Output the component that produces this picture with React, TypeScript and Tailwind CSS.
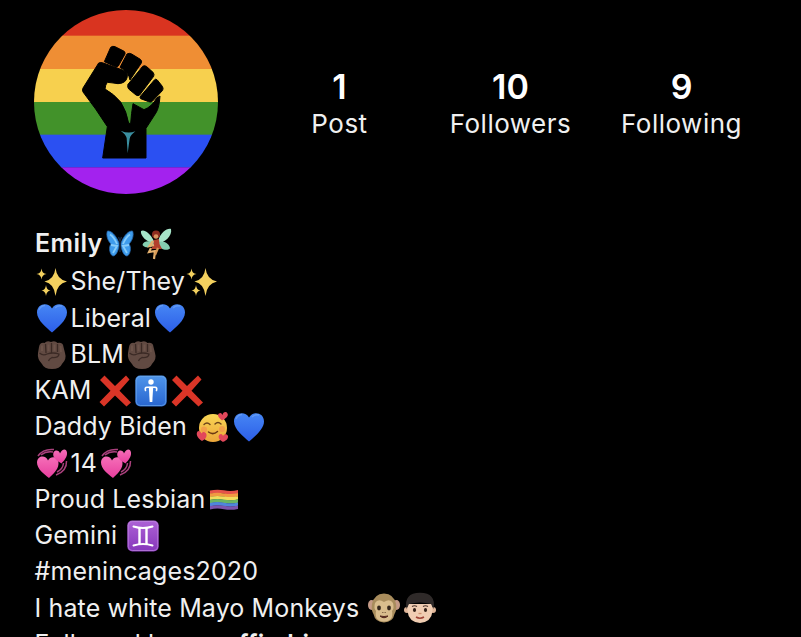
import React from 'react';
import clsx from 'clsx';

const Avatar = () => (
  <svg viewBox="24 26 552 552" className="h-[184px] w-[184px] shrink-0 rounded-full">
    <rect x="24" y="26" width="552" height="78" fill="#d93420" />
    <rect x="24" y="103" width="552" height="101" fill="#ef8e34" />
    <rect x="24" y="203" width="552" height="100" fill="#f7d04e" />
    <rect x="24" y="302" width="552" height="99" fill="#42922a" />
    <rect x="24" y="400" width="552" height="99" fill="#2b50f2" />
    <rect x="24" y="498" width="552" height="80" fill="#a322ee" />
    <g fill="#000" stroke="#000" strokeWidth="3" strokeLinejoin="round">
      <path d="M218 185 Q224 182 232 185 L292 207 Q306 213 304 226 Q301 246 276 247 Q256 244 244 243 Q238 250 237 263 Q264 278 284 302 Q302 330 308 366 L314 366 Q316 336 321 307 L354 325 Q378 316 392 290 L402 284 Q400 316 391 333 L360 381 L360 470 L230 470 L244 376 Q210 322 171 272 Q168 266 171 260 Z" />
      <path d="M254 138 Q260 133 267 136 L293 149 Q299 152 297 158 L277 194 Q274 199 268 196 L235 181 Z" />
      <path d="M303 158 Q310 154 317 158 L343 174 Q349 179 346 185 L312 236 Q308 212 282 198 Z" />
      <path d="M350 195 Q355 191 361 195 L381 213 Q386 219 383 225 L341 281 Q336 285 330 281 L308 263 Q303 256 306 249 Z" />
      <path d="M385 236 Q389 231 394 236 L409 255 Q413 261 410 267 L379 300 Q374 304 368 301 L344 292 Q340 288 344 284 Z" />
    </g>
    <path d="M284 388 Q307 398 328 390 Q313 402 311 412 L305 456 L302 410 Q300 400 284 388 Z" fill="#3a8fa0" />
  </svg>
);

const art: Record<string, React.ReactNode> = {
  butterfly: (
    <>
      <path d="M17 15 C14 7 9 2.500 5.500 3 C4 6 5 12 9 16 C6.500 19 7.500 25 10 27.500 C13 29.500 16 24 17 18 Z" fill="#3f9cec" stroke="#2566ac" strokeWidth=".8" />
      <path d="M19 15 C22 7 27 2.500 30.500 3 C32 6 31 12 27 16 C29.500 19 28.500 25 26 27.500 C23 29.500 20 24 19 18 Z" fill="#3f9cec" stroke="#2566ac" strokeWidth=".8" />
      <path d="M8 6.500 Q12 9 15 16 M9 17 L15 18 L11 25 M28 6.500 Q24 9 21 16 M27 17 L21 18 L25 25" stroke="#86ccfa" strokeWidth="1.800" fill="none" />
      <path d="M18 13 L18 24 M18 13 L16.500 9 M18 13 L19.500 9" stroke="#182a46" strokeWidth="1.200" />
    </>
  ),
  fairy: (
    <>
      <path d="M16 13 C12 5 6 1 3 3 C2 8 9 14 16 16 Z M20 13 C23 4 29 0 33 1 C34.500 8 27 14 20 16 Z" fill="#a6e5c9" />
      <path d="M17 15 C11 12 5 13 4.500 17 C7 21 14 19 17 17 Z M20 14 C26 12 32 16 32 20.500 C28 24 22 20 19 17 Z" fill="#84cfb1" />
      <circle cx="18" cy="6.500" r="4" fill="#8d2c20" />
      <circle cx="18" cy="8.500" r="2.300" fill="#d8945f" />
      <path d="M15.500 12 L21 11 L21.500 16 L24 21 L13 21 L15.500 17 Z" fill="#b3402c" />
      <path d="M15 13 L11.500 18 L16 17 M13 20 L11 24 L17 23 L16 31" stroke="#e3b06f" strokeWidth="2.200" fill="none" />
      <path d="M20 20 L17 27" stroke="#d79a55" strokeWidth="2.200" />
    </>
  ),
  sparkles: (
    <g fill="#f3d05e">
      <path d="M21.500 2 Q22.800 13.500 33 15.500 Q22.800 17.500 21.500 30 Q20.200 17.500 10.500 15.500 Q20.200 13.500 21.500 2 Z" />
      <path d="M7.500 2.500 Q8 7.500 12.500 8 Q8 8.500 7.500 13.500 Q7 8.500 2.500 8 Q7 7.500 7.500 2.500 Z" />
      <path d="M12 19 Q12.500 24 16.500 24.500 Q12.500 25 12 30 Q11.500 25 7.500 24.500 Q11.500 24 12 19 Z" />
    </g>
  ),
  heart: (
    <>
      <path d="M18 30.500 C13 26 3 18.500 3 10.500 C3 1.500 14 -.5 18 6.500 C22 -.5 33 1.500 33 10.500 C33 18.500 23 26 18 30.500 Z" fill="url(#heartBlue)" />
      <path d="M5 8 Q7 3.500 11 3.500 M21 6 Q24 3 28 4" stroke="#74a9f5" strokeWidth="1.300" fill="none" opacity=".6" />
    </>
  ),
  fist: (
    <>
      <path d="M5 8 Q6 3 10.500 4 Q13 1 17 3 Q21 1 23.500 4 Q29 3 29.500 8 L31 14 Q33 20 28 25 Q26 30 18 30 Q10 30 8 25 Q3 20 4 14 Z" fill="#614a42" />
      <path d="M11.500 5 L12 14 M17.500 4 L17.500 14 M23.500 5 L23.500 13" stroke="#3b2a25" strokeWidth="1.300" fill="none" />
      <path d="M5.500 14 Q9 17 13 15 Q19 13 25 15 Q25 19 18 18.500 Q15 20 14.500 22" fill="none" stroke="#3b2a25" strokeWidth="1.300" />
      <path d="M8 6.500 L8 12 M14.500 5.500 L14.500 12 M20.500 5.500 L20.500 12 M26.500 7 L27 13" stroke="#755b50" strokeWidth="2" opacity=".6" />
    </>
  ),
  cross: (
    <path d="M3 5 L7.500 .5 L18 11 L29 .5 L32.500 4.500 L22.500 15.800 L34 27.500 L29.500 31.500 L18 20.500 L7 31.500 L2.500 27 L13.500 15.800 Z" fill="#da3527" />
  ),
  mens: (
    <>
      <rect x="2.300" y=".5" width="31.400" height="31" rx="5" fill="url(#tileBlue)" />
      <rect x="3.300" y="1.500" width="29.400" height="29" rx="4" fill="none" stroke="#6ca7ea" strokeWidth=".7" />
      <circle cx="18" cy="7" r="2.700" fill="#fff" />
      <path d="M12.500 15.500 Q11.500 12.300 14 12.300 H22 Q24.500 12.300 23.500 15.500" stroke="#fff" strokeWidth="1.600" strokeLinecap="round" fill="none" />
      <path d="M15.800 11.800 H20.200 L19.300 27 H16.700 Z" fill="#fff" />
    </>
  ),
  adore: (
    <>
      <circle cx="18" cy="17" r="14" fill="url(#faceYellow)" />
      <path d="M9 13.500 Q12 10.500 15 13.500 M20 13 Q23 10 26 13" stroke="#6b431a" strokeWidth="1.400" fill="none" strokeLinecap="round" />
      <path d="M13.500 21 Q18 24.500 22.500 20.500" stroke="#6b3912" strokeWidth="1.500" fill="none" strokeLinecap="round" />
      <circle cx="9" cy="18.500" r="3" fill="#f3864d" opacity=".55" />
      <circle cx="27" cy="18" r="3" fill="#f3864d" opacity=".55" />
      <g fill="#e2475a">
        <path d="M27 9.500 C23 6 22 4 24 2.500 C26 1 27 3 27.500 4 C28 1 31 0 32.500 2.500 C34 5 30 8 27 9.500 Z" />
        <path d="M7 30 C2 27 .8 23 2.500 20.500 C4.500 19 6 21 6.500 22.500 C8 20 11 21 11.500 23.500 C12 27 9 29 7 30 Z" />
        <path d="M28 31 C24 28.500 22.500 26 24.500 23.500 C26.500 22 27.500 23.500 28 25 C29 22.500 32 22.500 33 25 C33.500 28.500 30 30 28 31 Z" />
      </g>
    </>
  ),
  hearts: (
    <>
      <path d="M4 9 Q9 1.500 20 2.500 M7 8 Q12 4 19 5 M32.500 14 Q33 24 22 28 M29.500 16 Q29 22 23 25" stroke="#a9407c" strokeWidth="1.500" fill="none" />
      <path d="M15 31 C10 27 3 22 3 15.500 C3.500 8 12 8 14 13.500 C17 8 25 10 24.500 17 C24 23 19 27 15 31 Z" fill="url(#heartPink)" />
      <path d="M27.500 16.500 C22 13.500 18 10 19.500 5.500 C21.500 2 25.500 4 26 6.500 C28 1.500 32.500 1 33 5.500 C33.500 10 30 13.500 27.500 16.500 Z" fill="url(#heartPink)" />
    </>
  ),
  flag: (
    <>
      {['#e5534a', '#f19a42', '#f2dc5c', '#6bb562', '#4e86dc', '#7d55ae'].map((color, i) => (
        <path
          key={color}
          transform={`translate(0 ${i * 3.1})`}
          d="M4 6.500 Q11 5 18 6.300 T32 6 V9.400 Q25 11 18 9.700 T4 9.900 Z"
          fill={color}
        />
      ))}
    </>
  ),
  gemini: (
    <>
      <rect x="2.300" y=".5" width="31.400" height="31" rx="5" fill="url(#tilePurple)" />
      <rect x="3.300" y="1.500" width="29.400" height="29" rx="4" fill="none" stroke="#bf86e0" strokeWidth=".7" />
      <path d="M8.500 6.500 Q18 9.500 27.500 6.500 M8.500 25.500 Q18 22.500 27.500 25.500" stroke="#fff" strokeWidth="2" fill="none" strokeLinecap="round" />
      <path d="M14.500 8 V24 M21.500 8 V24" stroke="#fff" strokeWidth="2.400" />
    </>
  ),
  monkey: (
    <>
      <ellipse cx="5.500" cy="13" rx="3.500" ry="5" fill="#c59a86" />
      <ellipse cx="30.500" cy="13" rx="3.500" ry="5" fill="#c59a86" />
      <path d="M6 12 Q8 2 18 1.500 Q28 2 30 12 Q31 18 28.500 22 Q27 30 18 30.500 Q9 30 7.500 22 Q5 18 6 12 Z" fill="#a88c5c" />
      <path d="M18 10 Q12 6 9 11 Q7.500 16 10 19 Q8 29 18 29.500 Q28 29 26 19 Q28.500 16 27 11 Q24 6 18 10 Z" fill="#d9bd8d" />
      <ellipse cx="13" cy="16" rx="1.900" ry="2.400" fill="#33251b" />
      <ellipse cx="23" cy="16" rx="1.900" ry="2.400" fill="#33251b" />
      <path d="M16.500 20 L17.200 21 M19.500 20 L18.800 21" stroke="#61442e" strokeWidth="1" />
      <path d="M14 24 Q18 27.500 22 24 Q18 25 14 24 Z" fill="#54281d" stroke="#54281d" strokeWidth="1" />
    </>
  ),
  boy: (
    <>
      <circle cx="5" cy="18" r="3" fill="#dfb497" />
      <circle cx="31" cy="18" r="3" fill="#dfb497" />
      <path d="M5.500 12 H30.500 V19 Q29.500 30 18 31 Q6.500 30 5.500 19 Z" fill="#f0cdb2" />
      <path d="M4.500 17 Q1.500 1 18 .8 Q34.500 1 31.500 17 L29 12 Q18 9 7 12 Z" fill="#2f2a29" />
      <path d="M10 14.500 Q12.500 13 15 14.500 M21 14.500 Q23.500 13 26 14.500" stroke="#4b3329" strokeWidth="1.100" fill="none" />
      <ellipse cx="12.500" cy="18" rx="1.600" ry="2" fill="#352219" />
      <ellipse cx="23.500" cy="18" rx="1.600" ry="2" fill="#352219" />
      <path d="M16.500 21.500 H19.500" stroke="#ce946f" strokeWidth="1.300" />
      <path d="M14 25 Q18 27.500 22 25" stroke="#a04336" strokeWidth="1.500" fill="none" />
    </>
  ),
};

const Gradients = () => (
  <svg className="absolute h-0 w-0">
    <defs>
      <linearGradient id="heartBlue" x1="0" y1="0" x2="0" y2="1">
        <stop offset="0" stopColor="#4686f4" />
        <stop offset="1" stopColor="#2c5ee8" />
      </linearGradient>
      <linearGradient id="tileBlue" x1="0" y1="0" x2="0" y2="1">
        <stop offset="0" stopColor="#4f95ea" />
        <stop offset="1" stopColor="#2865cf" />
      </linearGradient>
      <linearGradient id="tilePurple" x1="0" y1="0" x2="0" y2="1">
        <stop offset="0" stopColor="#ad62d6" />
        <stop offset="1" stopColor="#8636bb" />
      </linearGradient>
      <linearGradient id="heartPink" x1="0" y1="0" x2="0" y2="1">
        <stop offset="0" stopColor="#f56fb8" />
        <stop offset="1" stopColor="#e83e9e" />
      </linearGradient>
      <linearGradient id="faceYellow" x1="0" y1="0" x2="0" y2="1">
        <stop offset="0" stopColor="#f8d655" />
        <stop offset="1" stopColor="#eca63a" />
      </linearGradient>
    </defs>
  </svg>
);

const Emoji = ({ name }: { name: string }) => (
  <svg viewBox="0 0 36 32" className="h-8 w-9 shrink-0">
    {art[name]}
  </svg>
);

const stats = [
  { value: '1', label: 'Post' },
  { value: '10', label: 'Followers' },
  { value: '9', label: 'Following' },
];

type Line = { text: string; width: string; before?: string[]; after?: string[] };

const bio: Line[] = [
  { before: ['sparkles'], text: 'She/They', width: 'w-[114px]', after: ['sparkles'] },
  { before: ['heart'], text: 'Liberal', width: 'w-[81.5px]', after: ['heart'] },
  { before: ['fist'], text: 'BLM', width: 'w-[54px]', after: ['fist'] },
  { text: 'KAM', width: 'w-[63px]', after: ['cross', 'mens', 'cross'] },
  { text: 'Daddy Biden', width: 'w-[161px]', after: ['adore', 'heart'] },
  { before: ['hearts'], text: '14', width: 'w-[28px]', after: ['hearts'] },
  { text: 'Proud Lesbian', width: 'w-[172px]', after: ['flag'] },
  { text: 'Gemini', width: 'w-[91px]', after: ['gemini'] },
  { text: '#menincages2020', width: 'w-[240px]' },
  { text: 'I hate white Mayo Monkeys', width: 'w-[332px]', after: ['monkey', 'boy'] },
];

const App: React.FC = () => {
  return (
    <div className="h-[637px] w-[801px] overflow-hidden bg-black pl-[34px] pt-[10px] font-['Inter',sans-serif] text-[#f0f0f0]">
      <Gradients />
      <header className="flex">
        <Avatar />
        <div className="ml-9 mt-[57px] grid grid-cols-[171px_171px_171px]">
          {stats.map(stat => (
            <div key={stat.label} className="text-center">
              <div className="text-[34px] font-semibold leading-[39px] text-white">{stat.value}</div>
              <div className="text-[26px] leading-9 tracking-[0.5px]">{stat.label}</div>
            </div>
          ))}
        </div>
      </header>

      <section className="mt-[30px] whitespace-nowrap text-[25px] tracking-[0.13px]">
        <div className="flex h-[40px] items-center">
          <span className="w-[68px] pl-px font-semibold tracking-[0.4px]">Emily</span>
          <Emoji name="butterfly" />
          <Emoji name="fairy" />
        </div>
        {bio.map(line => (
          <div key={line.text} className="flex h-[36.25px] items-center">
            {line.before?.map((name, i) => <Emoji key={i} name={name} />)}
            <span className={clsx('shrink-0 pl-[0.5px]', line.width)}>{line.text}</span>
            {line.after?.map((name, i) => <Emoji key={i} name={name} />)}
          </div>
        ))}
        <div className="flex h-[36.25px] items-center">
          <span className="pl-[0.5px]">Followed by</span>
          <b className="ml-2 font-semibold">mr.affi.chi</b>
        </div>
      </section>
    </div>
  );
};

export default App;
